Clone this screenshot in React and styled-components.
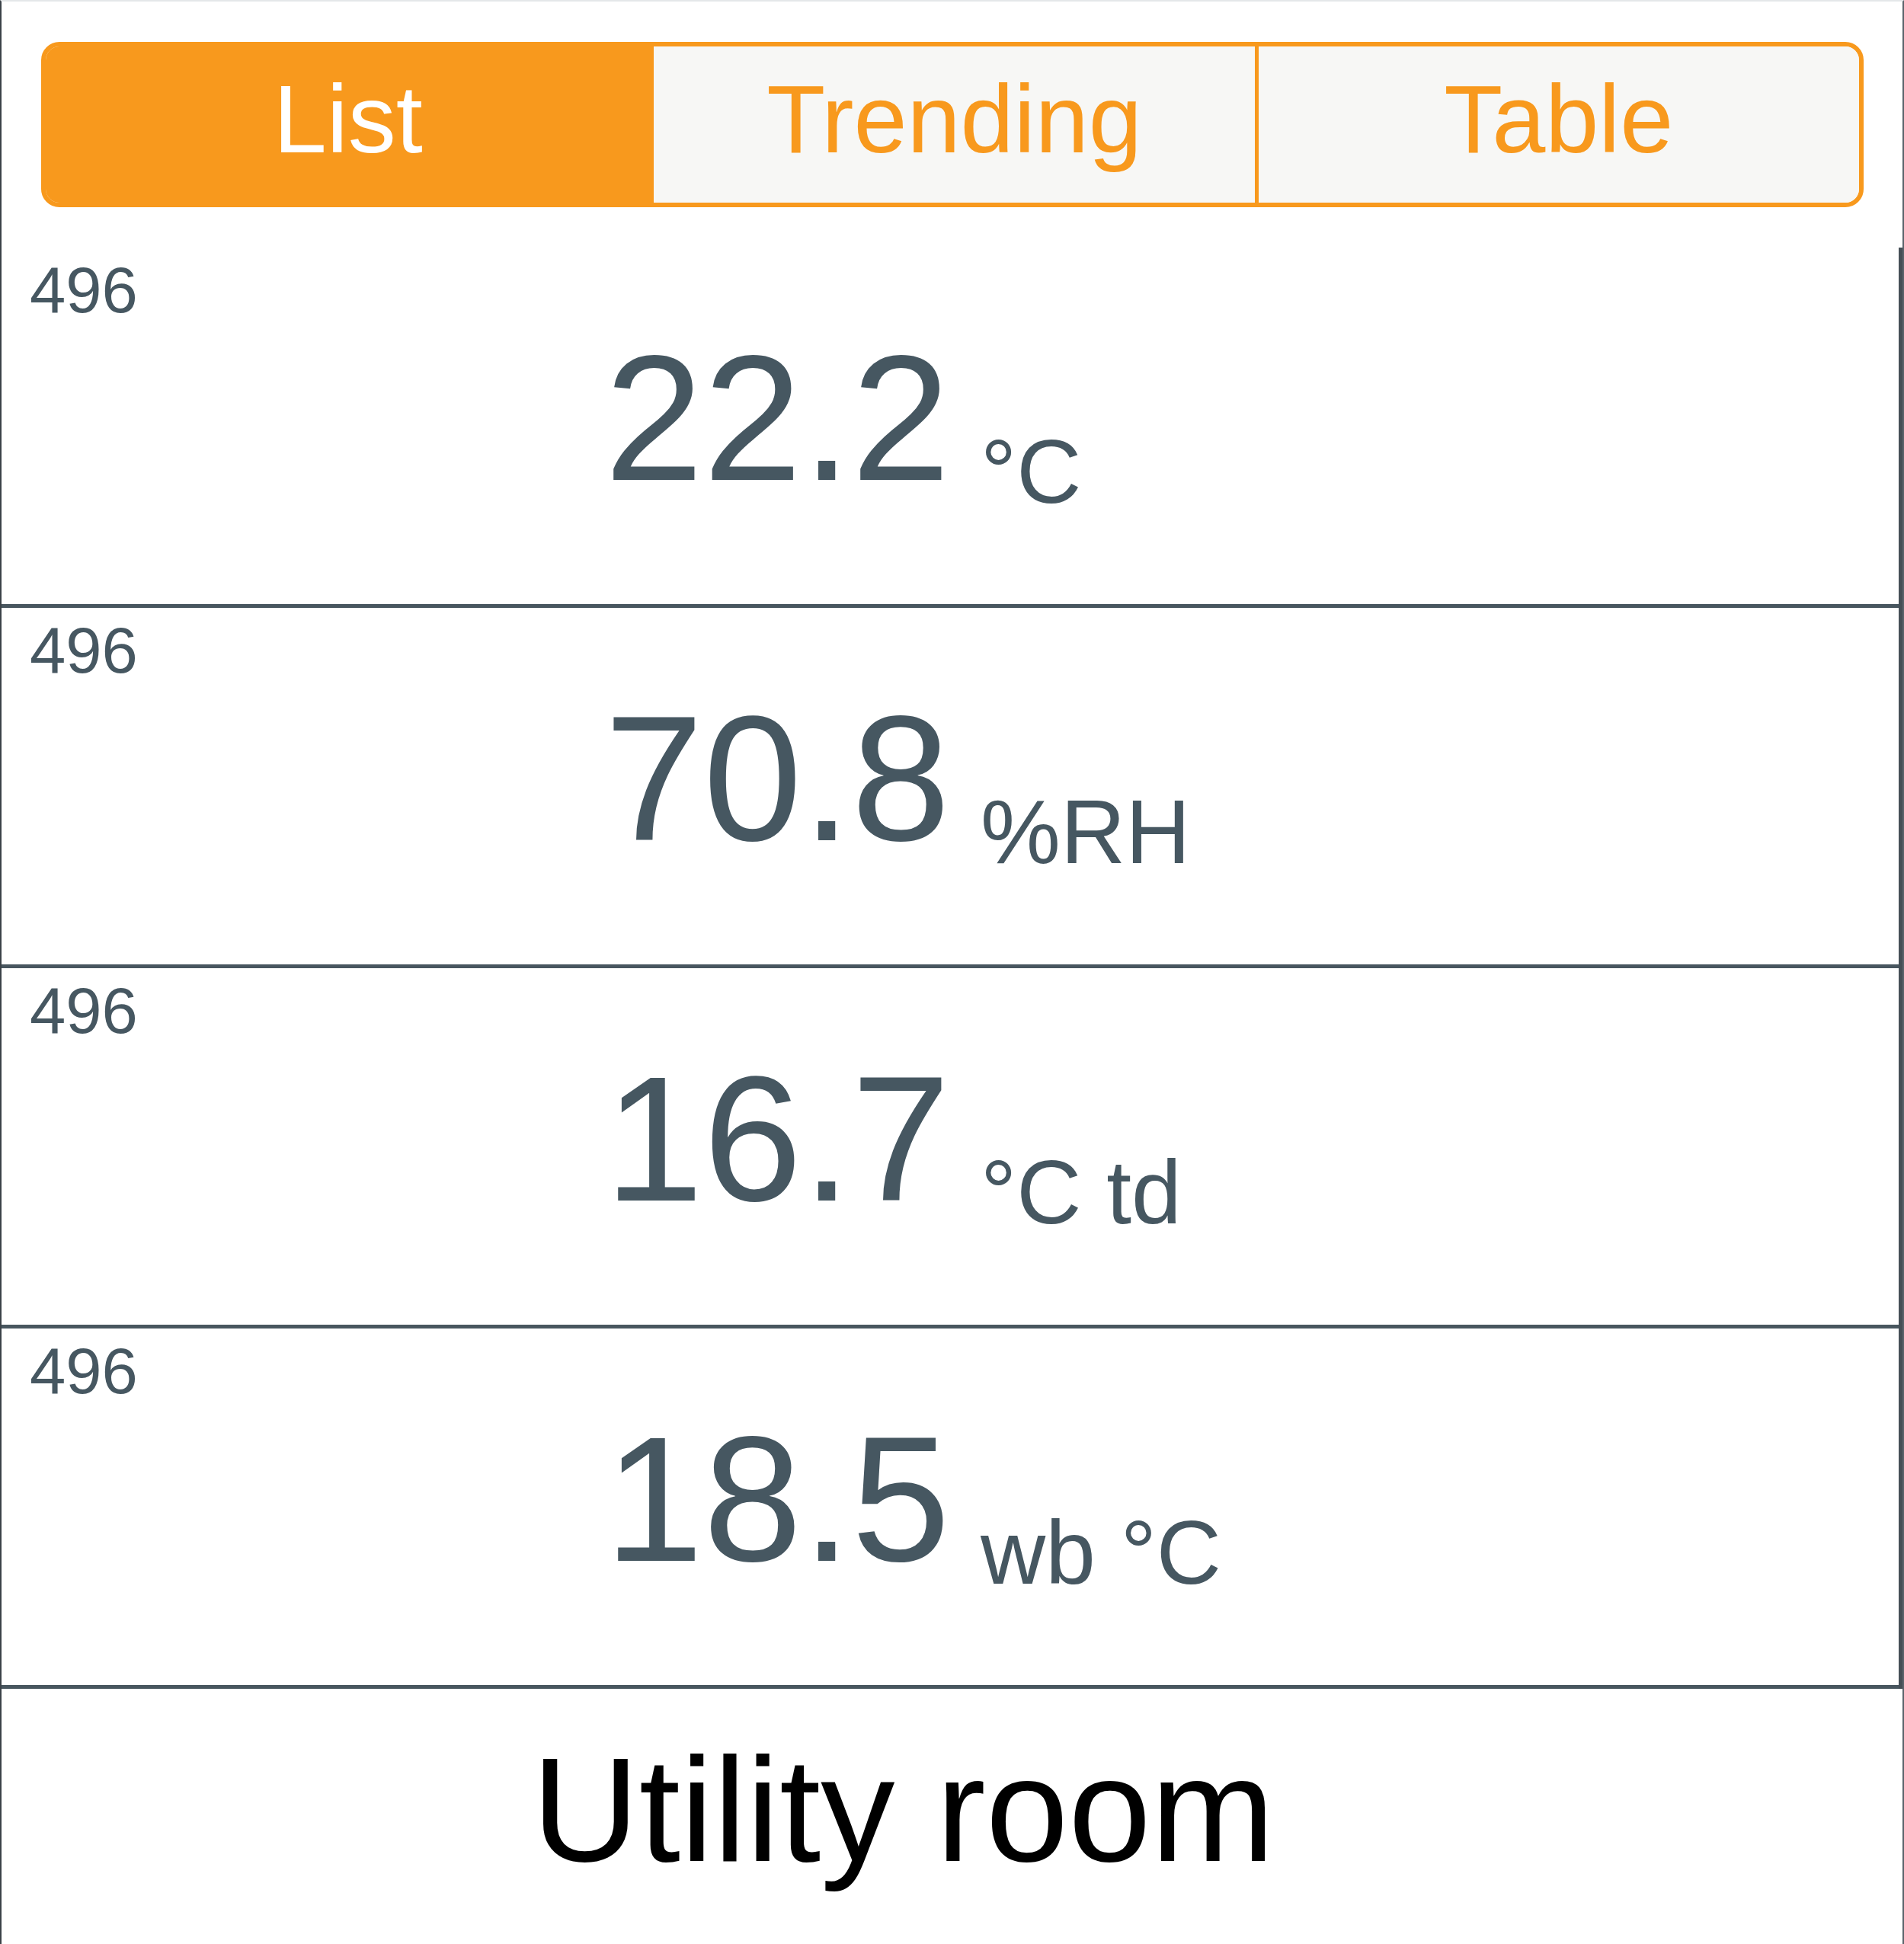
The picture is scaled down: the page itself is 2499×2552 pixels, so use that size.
import styled, { createGlobalStyle } from "styled-components";

const GlobalStyle = createGlobalStyle`
    html, body {
        margin: 0;
        padding: 0;
        background: #ffffff;
    }
    * {
        box-sizing: border-box;
    }
`

const Screen = styled.div`
    width: 2499px;
    height: 2552px;
    display: flex;
    flex-direction: column;
    background-color: #ffffff;
    border-top: 2px solid #e4e7e9;
    border-left: 2px solid #3b4248;
    border-right: 2px solid #5a636a;
    font-family: "Liberation Sans", Arial, sans-serif;
    overflow: hidden;
`

const SegmentBar = styled.div`
    display: grid;
    grid-template-columns: 1fr 1fr 1fr;
    height: 217px;
    margin: 53px 51px 0 52px;
    border: 6px solid #f8991d;
    border-radius: 24px;
    overflow: hidden;
    background-color: #f7f7f5;
`

const SegmentButton = styled.button`
    display: flex;
    align-items: center;
    justify-content: center;
    margin: 0;
    padding: 0 0 14px 0;
    border: none;
    border-left: ${(props) => (props.$first ? "none" : "5px solid #f8991d")};
    background-color: ${(props) => (props.$active ? "#f8991d" : "#f7f7f5")};
    color: ${(props) => (props.$active ? "#ffffff" : "#f8991d")};
    font-family: "Liberation Sans", Arial, sans-serif;
    font-size: 126px;
    line-height: 1;
`

const ReadingList = styled.div`
    margin-top: 53px;
    border-right: 5px solid #454f56;
    display: flex;
    flex-direction: column;
`

const ReadingRow = styled.div`
    height: 473px;
    padding: 9px 0 0 37px;
    border-bottom: 5px solid #48565f;
    display: flex;
    flex-direction: column;
`

const ChannelLabel = styled.div`
    font-size: 85px;
    line-height: 1.117;
    color: #465761;
`

const ReadingLine = styled.div`
    display: grid;
    grid-template-columns: 1fr 1fr;
    align-items: baseline;
    margin: 4px 0 0 -37px;
    color: #465761;
`

const ReadingValue = styled.div`
    text-align: right;
    font-size: 233px;
    line-height: 1;
`

const ReadingUnit = styled.div`
    padding-left: 40px;
    font-size: 118px;
    line-height: 1;
    transform: translateY(30px);
    white-space: pre;
`

const RoomName = styled.div`
    padding: 61px 128px 0 0;
    text-align: center;
    font-size: 195px;
    line-height: 1;
    color: #000000;
`

const tabs = ["List", "Trending", "Table"];

const readings = [
    { channel: "496", value: "22.2", unit: "°C" },
    { channel: "496", value: "70.8", unit: "%RH" },
    { channel: "496", value: "16.7", unit: "°C td" },
    { channel: "496", value: "18.5", unit: "wb °C" },
];

const App = () => {
    return (
        <>
            <GlobalStyle />
            <Screen>
                <SegmentBar>
                    {tabs.map((t, i) => (
                        <SegmentButton key={t} $first={i === 0} $active={i === 0}>{t}</SegmentButton>
                    ))}
                </SegmentBar>
                <ReadingList>
                    {readings.map((r, i) => (
                        <ReadingRow key={i}>
                            <ChannelLabel>{r.channel}</ChannelLabel>
                            <ReadingLine>
                                <ReadingValue>{r.value}</ReadingValue>
                                <ReadingUnit>{r.unit}</ReadingUnit>
                            </ReadingLine>
                        </ReadingRow>
                    ))}
                </ReadingList>
                <RoomName>{'Utility room'}</RoomName>
            </Screen>
        </>
    );
}

export default App;
